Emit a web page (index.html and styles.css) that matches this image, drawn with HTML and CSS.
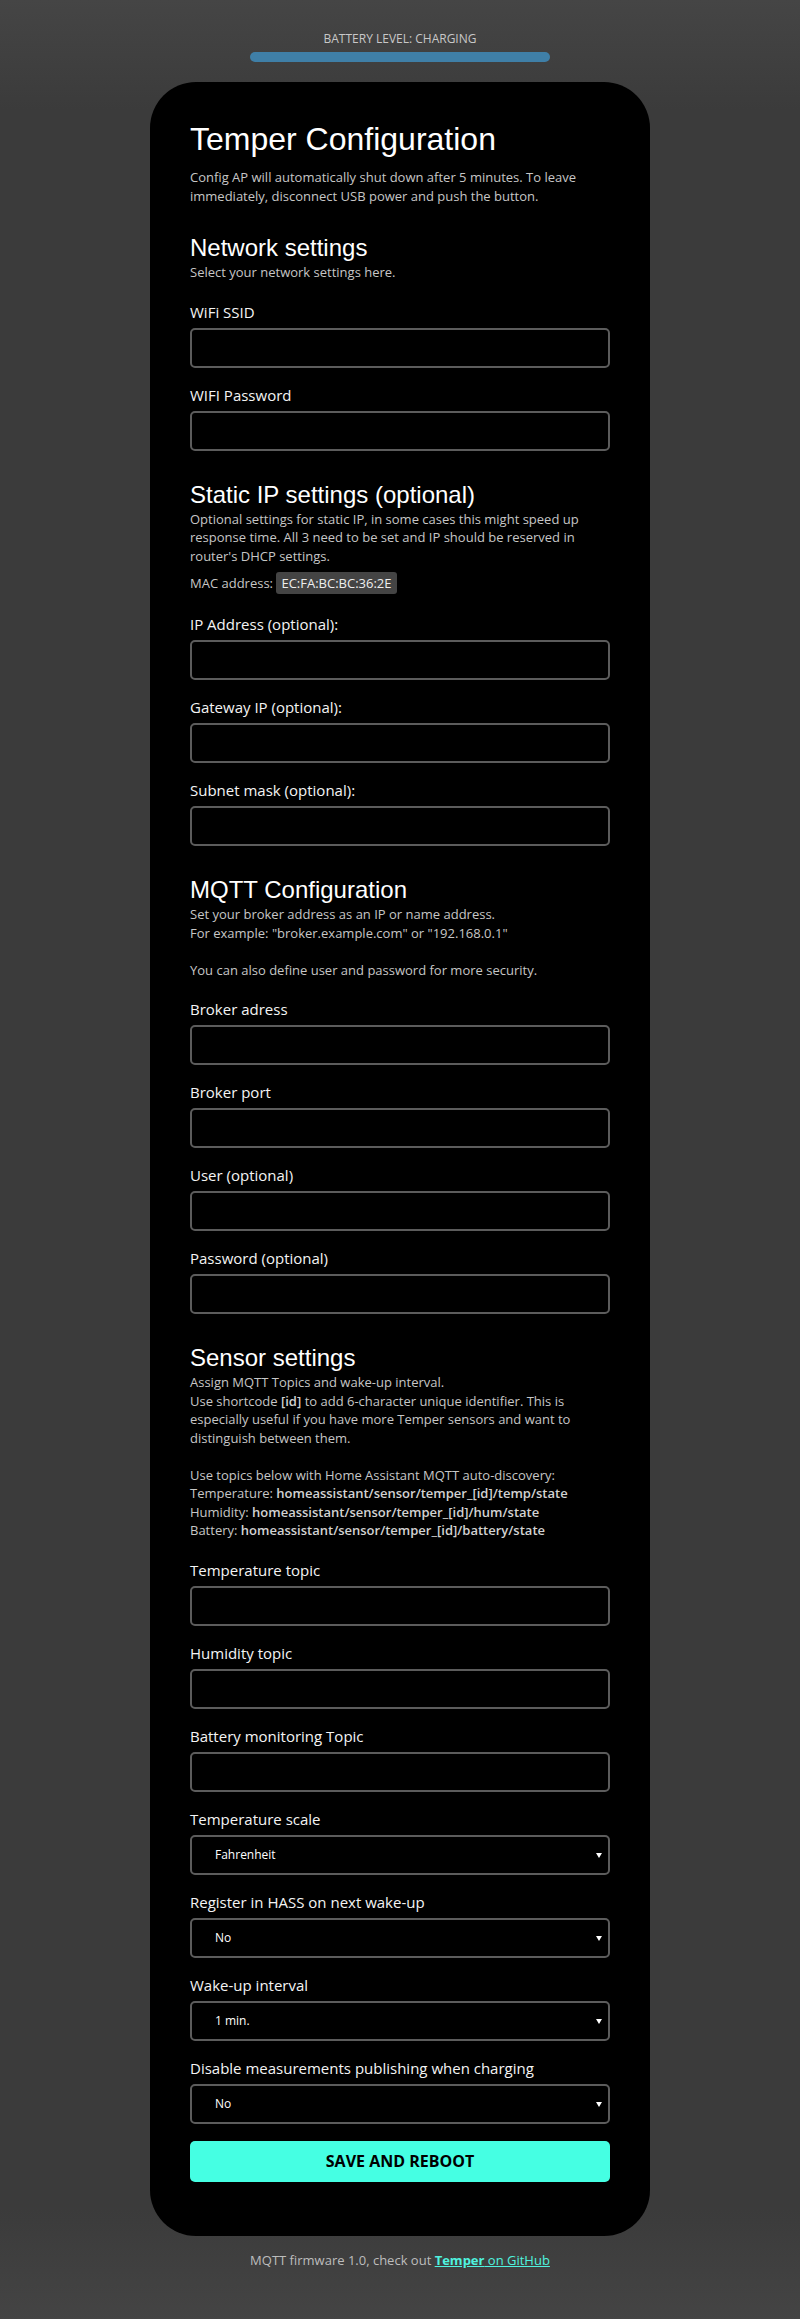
FILE: index.html
```html
<!DOCTYPE html>
<html lang="en">
<head>
<meta charset="utf-8">
<title>Temper Configuration</title>
<link rel="stylesheet" href="styles.css">
</head>
<body>
<div class="battery">
  <div class="battery-label">BATTERY LEVEL: CHARGING</div>
  <div class="battery-bar"></div>
</div>
<form class="card">
  <h1 class="title">Temper Configuration</h1>
  <p class="intro">Config AP will automatically shut down after 5 minutes. To leave immediately, disconnect USB power and push the button.</p>

  <section class="section">
    <h2 class="section-title">Network settings</h2>
    <p class="note">Select your network settings here.</p>
    <div class="field"><label class="label">WiFi SSID</label><input class="input" type="text"></div>
    <div class="field"><label class="label">WIFI Password</label><input class="input" type="password"></div>
  </section>

  <section class="section">
    <h2 class="section-title">Static IP settings (optional)</h2>
    <p class="note note-before-mac">Optional settings for static IP, in some cases this might speed up response time. All 3 need to be set and IP should be reserved in router's DHCP settings.</p>
    <p class="note">MAC address: <span class="chip">EC:FA:BC:BC:36:2E</span></p>
    <div class="field"><label class="label">IP Address (optional):</label><input class="input" type="text"></div>
    <div class="field"><label class="label">Gateway IP (optional):</label><input class="input" type="text"></div>
    <div class="field"><label class="label">Subnet mask (optional):</label><input class="input" type="text"></div>
  </section>

  <section class="section">
    <h2 class="section-title">MQTT Configuration</h2>
    <p class="note note-join">Set your broker address as an IP or name address.<br>For example: "broker.example.com" or "192.168.0.1"</p>
    <p class="note">You can also define user and password for more security.</p>
    <div class="field"><label class="label">Broker adress</label><input class="input" type="text"></div>
    <div class="field"><label class="label">Broker port</label><input class="input" type="text"></div>
    <div class="field"><label class="label">User (optional)</label><input class="input" type="text"></div>
    <div class="field"><label class="label">Password (optional)</label><input class="input" type="password"></div>
  </section>

  <section class="section">
    <h2 class="section-title">Sensor settings</h2>
    <p class="note note-join">Assign MQTT Topics and wake-up interval.<br><span class="line">Use shortcode <b>[id]</b> to add 6-character unique identifier. This is</span><br>especially useful if you have more Temper sensors and want to distinguish between them.</p>
    <p class="note">Use topics below with Home Assistant MQTT auto-discovery:<br><span class="topic">Temperature: <b>homeassistant/sensor/temper_[id]/temp/state</b></span><br><span class="topic">Humidity: <b>homeassistant/sensor/temper_[id]/hum/state</b></span><br><span class="topic">Battery: <b>homeassistant/sensor/temper_[id]/battery/state</b></span></p>
    <div class="field"><label class="label">Temperature topic</label><input class="input" type="text"></div>
    <div class="field"><label class="label">Humidity topic</label><input class="input" type="text"></div>
    <div class="field"><label class="label">Battery monitoring Topic</label><input class="input" type="text"></div>
    <div class="field"><label class="label">Temperature scale</label><div class="select-wrap"><select class="select"><option>Fahrenheit</option><option>Celsius</option></select></div></div>
    <div class="field"><label class="label">Register in HASS on next wake-up</label><div class="select-wrap"><select class="select"><option>No</option><option>Yes</option></select></div></div>
    <div class="field"><label class="label">Wake-up interval</label><div class="select-wrap"><select class="select"><option>1 min.</option><option>5 min.</option></select></div></div>
    <div class="field"><label class="label">Disable measurements publishing when charging</label><div class="select-wrap"><select class="select"><option>No</option><option>Yes</option></select></div></div>
  </section>

  <button class="save" type="button">SAVE AND REBOOT</button>
</form>
<p class="footer">MQTT firmware 1.0, check out <a class="link" href="#"><b>Temper</b> on GitHub</a></p>
</body>
</html>
```
FILE: styles.css
```css
html {
  min-height: 100%;
  background: linear-gradient(to bottom, #454545 0, #3b3b3b 110px, #3b3b3b calc(100% - 110px), #444444 100%);
}
body {
  margin: 0;
  padding-top: 31px;
  font-family: "Open Sans", "Noto Sans", sans-serif;
  font-size: 13px;
  color: #c6c6c6;
}
.battery {
  text-align: center;
}
.battery-label {
  font-size: 12px;
  line-height: 16px;
  color: #c8c8c8;
}
.battery-bar {
  width: 300px;
  height: 10px;
  margin: 5px auto 0;
  border-radius: 5px;
  background: #3f7fa7;
}
.card {
  width: 420px;
  margin: 20px auto 0;
  padding: 39px 40px 54px;
  background: #000;
  border-radius: 46px;
}
.title {
  margin: 0;
  font-family: "Liberation Sans", Arial, sans-serif;
  font-weight: normal;
  font-size: 32px;
  line-height: 37px;
  color: #fff;
}
.intro {
  margin: 10px 0 16px;
  line-height: 18.5px;
}
.section {
  display: flex;
  flex-direction: column;
}
.section-title {
  margin: 13px 0 0;
  font-family: "Liberation Sans", Arial, sans-serif;
  font-weight: normal;
  font-size: 24px;
  line-height: 28px;
  color: #fff;
}
.note {
  margin: 1px 0 20px;
  line-height: 18.5px;
}
.note b {
  font-weight: 600;
  color: #d2d2d2;
}
.note-join {
  margin-bottom: 17.5px;
}
.note-before-mac {
  margin-bottom: 6px;
}
.line,
.topic {
  white-space: nowrap;
}
.chip {
  display: inline-block;
  padding: 2px 5px;
  line-height: 18px;
  border-radius: 3px;
  background: #444;
  color: #eee;
}
.field {
  display: flex;
  flex-direction: column;
  gap: 6px;
  margin-bottom: 17px;
}
.label {
  font-size: 15px;
  line-height: 20px;
  color: #f4f4f4;
}
.input, .select {
  box-sizing: border-box;
  width: 100%;
  height: 40px;
  margin: 0;
  border: 2px solid #5c5c5c;
  border-radius: 5px;
  background: #000;
  color: #fff;
  font-family: inherit;
  font-size: 12px;
  outline: none;
}
.select {
  display: block;
  appearance: none;
  -webkit-appearance: none;
  padding: 0 0 0 23px;
}
.select-wrap {
  position: relative;
}
.select-wrap::after {
  content: "";
  position: absolute;
  right: 8px;
  top: 18px;
  border-left: 3px solid transparent;
  border-right: 3px solid transparent;
  border-top: 5px solid #fff;
  pointer-events: none;
}
.save {
  display: block;
  width: 100%;
  height: 41px;
  border: 0;
  border-radius: 5px;
  background: #45ffe3;
  color: #000;
  font-family: inherit;
  font-weight: bold;
  font-size: 16px;
}
.footer {
  margin: 15px 0 0;
  padding-bottom: 30px;
  text-align: center;
  font-size: 13px;
  line-height: 18px;
  color: #bdbdbd;
}
.link {
  color: #4ff3df;
}
```
